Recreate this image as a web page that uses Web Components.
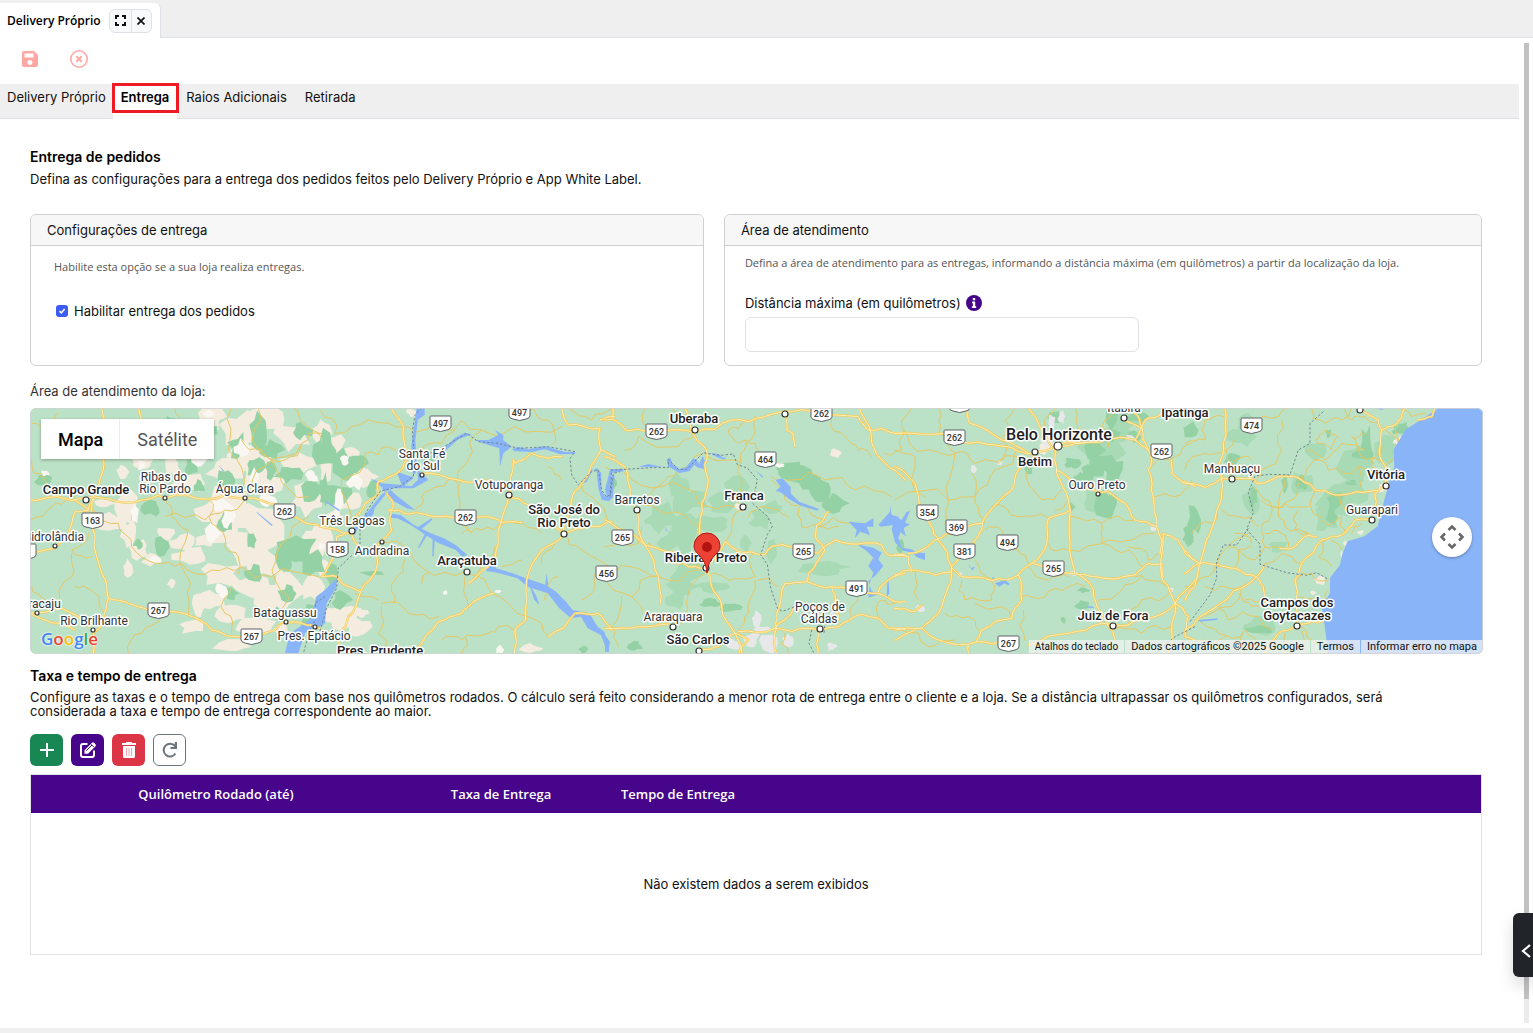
<!DOCTYPE html>
<html lang="pt-BR">
<head>
<meta charset="utf-8">
<title>Delivery Próprio</title>
<style>
  html, body { margin: 0; height: 100%; }
  body {
    font-family: Inter, "Liberation Sans", sans-serif;
    font-size: 13px;
    color: #111;
    background: #fff;
  }
</style>
</head>
<body>
<app-shell>
  <window-tab slot="window" label="Delivery Próprio"></window-tab>
  <form-toolbar></form-toolbar>
  <page-tabs>
    <a href="#delivery">Delivery Próprio</a>
    <a href="#entrega" aria-current="page">Entrega</a>
    <a href="#raios">Raios Adicionais</a>
    <a href="#retirada">Retirada</a>
  </page-tabs>
  <delivery-page></delivery-page>
</app-shell>
<side-drawer></side-drawer>

<script>
class BaseElement extends HTMLElement {
  constructor() {
    super();
    this.attachShadow({ mode: 'open' });
  }

  connectedCallback() {
    this.shadowRoot.innerHTML = this.template();
  }
}

class AppShell extends BaseElement {
  template() {
    return `
      <style>
        :host { display: flex; flex-direction: column; min-height: 100vh; box-sizing: border-box; border-bottom: 5px solid #f0f0f0; }
        header { display: flex; height: 37px; background: #efefef; border-bottom: 1px solid #dee2e6; }
        .body { flex: 1; display: flex; }
        main { flex: 1; min-width: 0; }
        .rail { width: 5px; margin: 5px 4px 5px 5px; background: #ebebeb; }
        .thumb { height: 97.5%; background: #c1c1c1; }
      </style>
      <header><slot name="window"></slot></header>
      <div class="body">
        <main><slot></slot></main>
        <div class="rail" aria-hidden="true"><div class="thumb"></div></div>
      </div>
    `;
  }
}

class WindowTab extends BaseElement {
  template() {
    return `
      <style>
        :host {
          display: flex;
          align-items: center;
          gap: 8px;
          box-sizing: border-box;
          height: 35px;
          margin-top: 3px;
          padding: 0 8px 0 7px;
          background: #fff;
          border-right: 1px solid #dee2e6;
          border-top-right-radius: 6px;
        }
        .title { font-family: "Open Sans", sans-serif; font-size: 12px; font-weight: 600; color: #000; }
        .group { display: flex; border: 1px solid #dee2e6; border-radius: 6px; background: #f8f9fa; }
        button { display: grid; place-items: center; width: 21px; height: 22px; padding: 0; border: 0; background: none; }
        button + button { border-left: 1px solid #dee2e6; width: 20px; }
      </style>
      <span class="title">${this.getAttribute('label')}</span>
      <div class="group">
        <button aria-label="Expandir">
          <svg width="11" height="11" viewBox="0 0 11 11" fill="none" stroke="#111" stroke-width="2"><path d="M1 4V1h3M7 1h3v3M10 7v3H7M4 10H1V7"/></svg>
        </button>
        <button aria-label="Fechar">
          <svg width="8" height="8" viewBox="0 0 8 8" fill="none" stroke="#111" stroke-width="1.700"><path d="M.5.500l7 7M7.500.500l-7 7"/></svg>
        </button>
      </div>
    `;
  }
}

class FormToolbar extends BaseElement {
  template() {
    return `
      <style>
        :host { display: flex; align-items: center; gap: 29px; height: 42px; padding: 0 20px 4px; }
        button { display: grid; place-items: center; width: 20px; height: 20px; padding: 0; border: 0; background: none; }
      </style>
      <button aria-label="Salvar" disabled>
        <svg width="16" height="16" viewBox="0 0 16 16"><path fill="#ffa8a3" fill-rule="evenodd" d="M2 0h10l4 4v10a2 2 0 0 1-2 2H2a2 2 0 0 1-2-2V2a2 2 0 0 1 2-2zM2.500 2.500v4h9v-4zM8 9a2.500 2.500 0 1 0 0 5 2.500 2.500 0 0 0 0-5z"/></svg>
      </button>
      <button aria-label="Cancelar" disabled>
        <svg width="18" height="18" viewBox="0 0 18 18" fill="none" stroke="#ffa8a3"><circle cx="9" cy="9" r="8.200" stroke-width="1.600"/><path stroke-width="2" d="M6.300 6.300l5.400 5.400M11.700 6.300l-5.400 5.400"/></svg>
      </button>
    `;
  }
}

class PageTabs extends BaseElement {
  template() {
    return `
      <style>
        :host { display: block; }
        nav { display: flex; height: 34px; background: #efefef; border-bottom: 1px solid #dee2e6; }
        ::slotted(a) {
          position: relative;
          box-sizing: border-box;
          height: 35px;
          padding: 0 9px;
          line-height: 27px;
          color: #111;
          text-decoration: none;
        }
        ::slotted(a:first-child) { padding: 0 7px; }
        ::slotted(a[aria-current]) { padding: 0 8px; background: #fff; color: #000; font-weight: 600; }
        ::slotted(a[aria-current])::after {
          content: "";
          position: absolute;
          inset: -1px -2px 6px -1px;
          border: 3px solid #ed1c24;
        }
      </style>
      <nav><slot></slot></nav>
    `;
  }
}

class PanelCard extends BaseElement {
  template() {
    return `
      <style>
        :host { display: block; box-sizing: border-box; height: 152px; border: 1px solid #d0d0d0; border-radius: 6px; overflow: hidden; }
        h3 { margin: 0; padding: 0 16px; font-size: 13px; font-weight: 400; line-height: 30px; background: #f7f7f7; border-bottom: 1px solid #d0d0d0; }
      </style>
      <h3>${this.getAttribute('heading')}</h3>
      <slot></slot>
    `;
  }
}

class DataGrid extends BaseElement {
  template() {
    return `
      <style>
        :host { display: block; border: 1px solid #dee2e6; }
        table { width: 100%; border-collapse: collapse; table-layout: fixed; }
        th { height: 38px; padding: 0; box-sizing: border-box; background: #46058b; color: #fff; font: 600 13px "Open Sans", sans-serif; }
        td { height: 141px; padding: 0; text-align: center; }
        .distance { width: 370px; }
        .fee { width: 200px; }
        .time { width: 154px; }
      </style>
      <table>
        <colgroup><col class="distance"><col class="fee"><col class="time"><col></colgroup>
        <thead><tr><th>Quilômetro Rodado (até)</th><th>Taxa de Entrega</th><th>Tempo de Entrega</th><th></th></tr></thead>
        <tbody><tr><td colspan="4">Não existem dados a serem exibidos</td></tr></tbody>
      </table>
    `;
  }
}

class IconButton extends BaseElement {
  template() {
    return `
      <style>
        :host { display: block; }
        button { display: grid; place-items: center; box-sizing: border-box; width: 33px; height: 32px; padding: 0; border: 1px solid transparent; border-radius: 6px; color: #fff; background: var(--button-color); }
        :host([outline]) button { color: #6c757d; border-color: #6c757d; background: #fff; }
      </style>
      <button aria-label="${this.getAttribute('label')}"><slot></slot></button>
    `;
  }
}

class DeliveryPage extends BaseElement {
  template() {
    return `
      <style>
        :host { display: block; padding: 28px 37px 0 30px; }
        h2 { margin: 0; font-size: 14px; font-weight: 600; line-height: 20px; color: #000; }
        p { margin: 0; }
        .lead { margin-top: 2px; line-height: 20px; }
        .cards { display: grid; grid-template-columns: 8fr 9fr; gap: 20px; margin-top: 25px; }
        .hint { font: 11px/16px "Open Sans", sans-serif; color: #555; }
        .enable { padding: 13px 23px; }
        .check { display: flex; align-items: center; gap: 6px; margin: 26px 0 0 2px; line-height: 20px; }
        .check input {
          appearance: none;
          width: 12px;
          height: 12px;
          margin: 0;
          border-radius: 3px;
          background: #3b5cf5 url("data:image/svg+xml,%3Csvg xmlns='http://www.w3.org/2000/svg' viewBox='0 0 12 12'%3E%3Cpath fill='none' stroke='white' stroke-width='1.6' d='M3.500 6.200l1.800 1.700 3.300-3.800'/%3E%3C/svg%3E");
        }
        .area { padding: 9px 20px; }
        .field { display: flex; align-items: center; gap: 5px; margin-top: 22px; line-height: 20px; }
        .distance { display: block; box-sizing: border-box; width: 55%; height: 35px; margin-top: 4px; padding: 0 12px; border: 1px solid #dee2e6; border-radius: 6px; font: inherit; }
        .map-title { margin-top: 15px; line-height: 20px; color: #333; }
        store-map { margin-top: 7px; }
        .rates { margin-top: 12px; }
        .rates + p { margin-top: 4px; padding-right: 32px; line-height: 14px; }
        .actions { display: flex; gap: 8px; margin: 16px 0 8px; }
      </style>
      <h2>Entrega de pedidos</h2>
      <p class="lead">Defina as configurações para a entrega dos pedidos feitos pelo Delivery Próprio e App White Label.</p>
      <div class="cards">
        <panel-card heading="Configurações de entrega">
          <div class="enable">
            <p class="hint">Habilite esta opção se a sua loja realiza entregas.</p>
            <label class="check"><input type="checkbox" checked>Habilitar entrega dos pedidos</label>
          </div>
        </panel-card>
        <panel-card heading="Área de atendimento">
          <div class="area">
            <p class="hint">Defina a área de atendimento para as entregas, informando a distância máxima (em quilômetros) a partir da localização da loja.</p>
            <div class="field">
              <label for="distance">Distância máxima (em quilômetros)</label>
              <svg width="16" height="16" viewBox="0 0 16 16"><circle cx="8" cy="8" r="8" fill="#46058b"/><path fill="#fff" d="M6.800 3h2.400v2.200H6.800zM6 6.500h3.200v4.700h1V13H5.900v-1.800h1V8.200H6z"/></svg>
            </div>
            <input class="distance" id="distance" type="text">
          </div>
        </panel-card>
      </div>
      <p class="map-title">Área de atendimento da loja:</p>
      <store-map></store-map>
      <h2 class="rates">Taxa e tempo de entrega</h2>
      <p>Configure as taxas e o tempo de entrega com base nos quilômetros rodados. O cálculo será feito considerando a menor rota de entrega entre o cliente e a loja. Se a distância ultrapassar os quilômetros configurados, será considerada a taxa e tempo de entrega correspondente ao maior.</p>
      <div class="actions">
        <icon-button label="Adicionar" style="--button-color: #198754">
          <svg width="14" height="14" viewBox="0 0 14 14" stroke="#fff" stroke-width="2"><path d="M7 0v14M0 7h14"/></svg>
        </icon-button>
        <icon-button label="Editar" style="--button-color: #46058b">
          <svg width="18" height="18" viewBox="0 0 18 18" fill="none" stroke="#fff" stroke-width="2"><path d="M8.500 3H4Q2 3 2 5v9q0 2 2 2h9q2 0 2-2V9.500"/><path fill="#fff" stroke="none" d="M5.500 9.200L13 1.700q1-1 2 0l1.500 1.500q1 1 0 2L9 12.700H5.500z"/><path stroke="#46058b" stroke-width="1" d="M7.200 9.800l5.700-5.700M12 3.200l3 3"/></svg>
        </icon-button>
        <icon-button label="Excluir" style="--button-color: #dc3545">
          <svg width="14" height="16" viewBox="0 0 14 16"><path fill="#fff" d="M4.500 0h5l.7 1H14v2H0V1h3.800zM1 4h12v10.500q0 1.500-1.500 1.500h-9Q1 16 1 14.500z"/><path stroke="#f0a6ac" d="M4.500 6v8M7 6v8M9.500 6v8"/></svg>
        </icon-button>
        <icon-button label="Atualizar" outline>
          <svg width="16" height="16" viewBox="0 0 16 16" fill="none" stroke="#6c757d" stroke-width="2"><path d="M13.500 11.500A6.400 6.400 0 1 1 13 4"/><path fill="#6c757d" stroke="none" d="M15 0v7H8.500V5H12L13 0z"/></svg>
        </icon-button>
      </div>
      <data-grid></data-grid>
    `;
  }
}

// Map data. The map is split in five tiles, 870 units apart, three units to a pixel.
const TILES = [
  {
    beige: [[560,50,45,40],[640,90,60,60],[720,60,60,40],[800,110,60,40],[680,180,70,50],[600,210,60,40],[480,120,30,50],[440,200,30,30],[500,250,60,30],[610,300,70,60],[710,240,60,50],[830,190,60,40],[850,300,60,50],[560,340,50,40],[590,400,50,50],[680,350,70,40],[730,400,60,50],[470,430,40,30],[420,400,30,20],[500,470,60,30],[650,450,50,50],[720,490,60,50],[590,520,60,40],[670,560,60,40],[740,600,60,50],[800,570,60,50],[560,600,40,30],[620,640,50,30],[500,680,40,25],[520,620,20,40],[300,320,40,50],[260,370,50,30],[310,400,30,40],[340,450,30,30],[380,480,30,20],[290,215,20,20],[240,310,30,20],[200,370,20,20],[440,550,15,15],[310,505,20,25],[350,190,40,20],[370,230,30,20],[850,440,50,50],[860,560,40,50],[700,680,60,30],[620,740,60,20],[770,690,30,20],[540,420,40,20]],
    dark: [[700,90,30,60],[640,140,30,40],[740,150,35,30],[790,220,40,30],[830,90,30,30],[600,240,30,40],[690,200,30,30],[500,200,25,35],[520,260,20,20],[380,325,30,25],[600,370,25,35],[780,340,30,20],[860,270,30,40],[410,440,25,30],[340,430,15,20],[820,440,60,40],[780,480,30,40],[860,490,40,40],[790,580,30,25],[690,520,30,25],[620,580,20,20],[850,650,30,40],[440,90,20,50],[60,240,30,20],[740,210,20,30],[680,420,20,30],[760,640,25,20],[560,90,20,20]],
    white: [[60,220,15,10],[520,180,25,25],[650,150,25,30],[690,235,15,30],[580,320,25,25],[610,350,20,40],[560,400,25,35],[390,480,18,12],[330,340,15,30],[590,570,20,25],[730,300,30,20],[550,40,15,12],[860,230,20,20],[350,195,15,20]],
    major: [[[230,24],[245,130],[235,210],[205,290]],[[15,300],[100,290],[150,300],[205,290],[300,308],[400,285],[420,295],[550,297],[600,285],[660,295],[760,315],[880,375]],[[150,300],[190,330],[205,295],[200,330],[210,410],[230,520],[250,595],[235,660],[205,700],[205,760]],[[190,330],[150,335],[130,400],[90,445],[15,460]],[[250,595],[310,610],[370,630],[440,635],[490,645],[560,690],[620,710],[680,705],[750,690],[780,665],[830,670],[890,690]],[[15,640],[110,625],[190,680]],[[15,640],[60,660],[150,690]],[[340,24],[350,60]]],
    minor: [[[200,330],[280,370],[320,440],[390,490],[470,490],[560,510],[650,500],[740,530],[880,530]],[[420,295],[440,350],[490,390],[480,520],[490,640]],[[620,24],[610,150],[650,280]],[[700,24],[700,150],[760,220],[850,290]],[[650,280],[720,200],[830,130],[890,100]],[[550,297],[560,370],[600,440],[640,470],[640,520]],[[20,70],[80,80],[100,40]],[[20,180],[60,240],[150,290]],[[15,360],[80,320],[140,300]],[[110,625],[140,530],[140,460]],[[190,400],[140,450],[200,470]],[[240,640],[180,560],[150,560]],[[410,650],[350,700],[310,760]],[[620,560],[600,640],[620,700]],[[850,350],[770,430],[750,540],[780,660]],[[760,24],[850,80],[890,130]],[[420,350],[540,360],[600,330],[660,300]],[[450,24],[470,80],[500,120]],[[830,130],[780,180],[710,150],[650,120]],[[20,560],[60,600],[110,625]]],
    water: ['M780 760l15-60 60-40 20-70 25-20v60l-30 50-30 20-20 60z','M695 335l48 40-3 3-45-40z','M580 195l18 18-3 2z'],
    border: ['M900 590l-30 20 5 40-20 40-20 70']
  },
  {
    beige: [[20,100,30,50],[60,140,40,40],[110,170,30,30],[150,230,40,40],[100,300,40,40],[30,220,20,40],[60,350,30,20],[20,400,30,30],[40,430,15,40],[20,500,30,30],[40,640,40,30],[90,650,50,40],[130,680,40,30],[290,38,20,12],[650,745,35,15],[140,640,20,15]],
    dark: [[30,150,40,60],[90,200,40,60],[60,280,60,30],[130,190,30,30],[170,270,20,30],[25,270,15,50],[20,600,20,30],[50,520,20,40],[340,180,25,15],[80,600,30,30],[805,748,15,12],[170,520,40,8]],
    white: [[120,240,25,30],[70,310,15,40],[90,180,15,20],[550,575,12,6],[555,748,14,12],[390,578,8,8],[20,440,10,15]],
    major: [[[230,24],[265,80],[275,180],[245,220],[190,245],[190,280],[150,310],[120,350],[108,390]],[[15,380],[108,400]],[[108,390],[130,440]],[[320,220],[430,240],[520,242]],[[90,400],[65,410],[40,500],[20,530],[65,530],[80,550],[135,575]],[[220,330],[280,342],[380,350],[430,355],[510,350],[560,367],[620,368]],[[215,280],[235,320],[225,350],[230,390],[190,430],[165,540],[135,580],[100,650],[65,760]],[[740,24],[760,75],[855,85],[858,150],[800,250],[770,300],[745,400],[680,450],[635,540],[632,660],[600,690],[598,760]],[[595,180],[600,190],[650,160],[700,175],[740,170]],[[595,180],[580,290],[560,360],[550,430],[520,500],[460,550]],[[580,290],[640,315],[690,370],[745,400],[820,380],[890,365]],[[300,750],[370,665],[440,640],[460,620],[535,580]],[[700,710],[780,640],[850,640],[890,690]],[[855,60],[900,50]],[[858,150],[900,170]]],
    minor: [[[15,30],[60,100],[160,60],[240,80],[380,90],[500,90],[600,80],[740,80]],[[270,180],[220,140],[150,160],[80,240],[90,380]],[[440,240],[435,320],[440,370],[470,400]],[[430,250],[370,260],[320,290],[300,330]],[[570,370],[500,390],[440,400]],[[745,400],[800,450],[890,530]],[[680,490],[720,430]],[[480,540],[500,490],[540,440]],[[200,430],[330,510],[450,515]],[[460,520],[530,580],[640,650],[700,710]],[[450,530],[460,620]],[[340,520],[320,550]],[[200,610],[280,640],[370,650]],[[235,610],[240,540],[270,480]],[[200,620],[190,700],[220,760]],[[380,720],[440,720],[520,700],[550,680],[600,690]],[[440,760],[450,710]],[[730,530],[700,570],[690,600]],[[500,90],[460,180],[430,240]],[[420,90],[380,130],[320,160]],[[760,24],[830,60],[890,24]],[[800,250],[850,310],[885,370]],[[800,600],[840,560],[850,500]],[[740,240],[700,200]],[[600,370],[680,400]],[[620,480],[560,500]],[[640,24],[700,60],[720,130]],[[120,580],[190,600]]],
    water: ['M305 24h24v20l-20 15-8 60 8 120-20 20-40-5-30 20-40 50-5 20-40 30-15 30-15-5 25-30 30-35 40-50 30-20 40-8 25-20-5-100z','M165 235l40 30 90 0 45-25-30-30-20 20-45-15 15 40-60-5z','M200 265l30 35 45 25 25 5-15-12-45-35-20-20z','M222 340l35 5 40 30 50 25 40 15 35 20 35 30-15 5-20-20-50-20-40-25-45-30-40-20-25-2z','M340 400l-28 45-3-2 24-48z','M360 410l-4 60-4-1 1-65z','M310 380l40-25 2 4-35 30z','M535 470l8 35 50 15 40 15 60 20 30 20 30 30 20 25 50 10 25 40 20 15 15 60-7-2-18-48-40-20-20-35-30 5-35-30-35-45-60-20-30-25-60-17-35-5z','M640 545l25 45 8 25-15-15-15-45z','M690 560l5-40 5 35z','M345 160l40-12 35-35 30-15 20 5-40 15-40 35z','M480 120l40 0 30-15-10-15 25 15 0 15 25 20-25 20-10 40-2-55-50-15z','M590 148l20-8 30 8 50-10 60 18 30 0v5l-45 2-45-15-40 8-50-2z','M800 250l25-40 22-5 12 15v50l12 20 12-5 8-60 8 2-5 65-12 12-22-5-10-35-5-50-10-8-20 40z','M30 300l45 30-3 4-40-28z','M0 610l30-40 35-35v25l-30 50-5 60-30 20z'],
    border: ['M320 24l-20 20-8 50 8 90-5 45-40 30-60 15-40 60-20 50v60l-65 60-5 60-30 60-20 70','M345 160l60-30 50-30 35 25 60 5 60 15 90-5 80 15-15 20 5 50 20 30 40-40 20-5 10 60 15 22 12-12 8-60 20-5']
  },
  {
    beige: [[400,318,12,10],[690,160,20,14],[525,197,18,8],[415,328,10,8]],
    dark: [[560,215,50,28],[600,235,50,35],[640,265,50,40],[690,310,45,35],[320,610,35,15],[380,622,40,18],[90,738,25,15],[25,245,14,20],[885,440,12,20],[550,205,40,15]],
    mid: [[220,260,35,40],[170,350,50,50],[250,300,60,40],[240,400,40,60],[330,370,60,30],[390,260,40,40],[350,310,40,30],[470,360,40,30],[200,420,40,30],[250,520,50,40],[210,600,30,25],[300,470,40,30],[330,560,50,20],[420,430,20,30],[500,450,20,40],[640,510,60,20],[500,320,30,20],[140,360,30,15],[680,500,50,15],[230,560,50,25]],
    white: [[525,197,16,7]],
    urban: [[455,660,15,25],[440,720,25,30],[490,730,30,30],[385,735,20,20],[680,740,15,15],[475,690,30,10],[305,505,15,12],[680,640,10,8],[550,720,18,22]],
    major: [[[0,60],[30,60],[60,90],[130,95],[270,97],[380,60],[480,50],[560,35],[620,35],[760,50],[790,90],[830,85],[890,100]],[[240,24],[260,90],[305,150],[310,240],[290,310],[283,400],[300,500],[320,560],[350,620],[390,700],[410,760]],[[0,170],[60,200],[75,290],[95,330],[120,435],[160,530]],[[0,360],[50,390],[120,435],[200,455],[250,500],[290,505]],[[310,490],[360,425],[400,455],[480,463],[500,440],[530,433],[590,440],[640,460],[690,420],[760,432],[830,435],[850,465],[900,465]],[[540,45],[545,90],[565,100],[570,140]],[[670,335],[635,375],[635,420],[660,450],[640,480],[610,520],[605,545],[540,550],[515,640],[510,700],[515,760]],[[605,545],[680,560],[740,565],[800,580],[870,605],[900,605]],[[820,575],[850,540],[900,520]],[[0,685],[100,680],[190,672]],[[400,695],[510,685],[560,695],[640,690],[700,680],[760,645],[820,655],[850,685],[900,688]],[[510,685],[550,650],[570,620]],[[160,530],[165,610]],[[765,24],[780,60],[810,150],[830,180],[870,210],[900,240]],[[640,700],[640,760]],[[680,560],[690,610],[700,660]],[[290,750],[340,740],[390,700]],[[390,700],[430,720],[400,760]],[[24,24],[20,60]]],
    minor: [[[305,160],[250,200],[190,230],[100,290]],[[270,100],[220,140],[100,110],[60,150]],[[420,60],[370,90],[400,130],[450,130],[480,170]],[[425,130],[400,200],[410,260],[400,310]],[[500,230],[560,240],[660,240],[750,270],[860,290]],[[500,240],[540,300],[590,310],[660,360]],[[415,330],[380,390],[360,425]],[[100,300],[180,340],[280,380]],[[60,220],[170,260],[280,310],[390,320]],[[130,430],[200,490],[290,505]],[[0,440],[100,430],[110,380]],[[0,520],[80,590],[190,670]],[[80,590],[160,530],[280,510]],[[165,530],[80,500],[20,510]],[[300,520],[250,580],[240,640],[200,680]],[[320,520],[370,540],[450,530],[445,460]],[[420,130],[450,50]],[[680,60],[720,110],[760,150],[800,170]],[[590,310],[590,380],[640,380],[730,370]],[[640,380],[700,380]],[[120,24],[130,80]],[[430,350],[480,320],[550,350]],[[310,170],[380,180],[410,190]],[[450,540],[430,640],[400,690]],[[720,560],[760,600],[740,650]],[[820,650],[830,600],[870,610]],[[550,760],[540,700]],[[0,200],[60,220]],[[160,640],[160,680]],[[460,540],[520,560]],[[840,160],[890,150],[895,90]],[[200,24],[240,60]],[[50,590],[20,680],[40,740]]],
    water: ['M100 200l30-8 40 8 20 0-5-20 10-8 8 20 20 15 20-5 20-25 10 0 10 15 10-25 8 20-5 20-20-5-8-8-15 20-30 5-30-18-30 0-40 0z','M320 160l20 2 15 12 10-5-8 10-15-5-20-10z','M512 240l20-5 25 25 0 20 25 25 60 22-5 5-50-15-35-20-25-20-15-5 15-12z','M450 210l25 20-5 2z','M730 365l50 5 25-15 0 25-20 0 10 25-30-10-15 20 5-25z','M820 375l35-40 0-20 5 30 20 5 15 30 8 30-40-35-35 5z','M755 433l50 10 25 15-10 20 15 20-25 30-20 15 10 30 20 10-30 10 5-45 10-30-15-20 15-25-20-20z','M15 208l40-2v8l-35 5-5 50 5 20-12 10-8-30z','M0 705l15 20-5 30-10 0z','M850 530l3 50-8 10 2-50z','M180 380l6 10-2 6z'],
    border: ['M15 290l5-80 40-2 80-5 50 0v-25l30 30 25 0 30-30 20-20 50 8 40-4 12 32 30 10 30 35-15 70 45 40 15 30-15 25-20 60 20 30 10 70 20 60 15 10 55-20 50 10 25 30-5 45','M620 690l-8 40 15 30']
  },
  {
    beige: [[460,140,25,18],[440,155,20,10]],
    dark: [[600,150,30,30],[655,210,35,50],[580,210,30,30],[630,310,40,45],[610,200,35,30],[530,190,25,20],[480,50,30,20],[560,240,25,25],[730,50,40,15],[640,110,40,20],[565,570,20,10],[560,615,25,15],[505,660,8,12],[650,60,20,30],[880,400,15,40],[20,440,8,25],[400,210,15,20],[530,320,10,15],[720,110,20,20]],
    mid: [[620,160,70,60],[670,100,50,40],[600,300,40,40],[700,60,60,30]],
    urban: [[235,207,12,12],[315,188,10,8],[75,625,14,14],[470,65,12,25],[455,120,20,20],[195,525,10,8],[705,112,15,8],[535,520,12,8],[775,385,10,8],[500,50,12,20],[830,570,8,8]],
    major: [[[0,100],[150,100],[200,125],[300,135],[370,155],[420,158],[480,140],[560,128],[660,115],[720,120],[760,150],[770,180],[760,210],[775,290],[785,380],[800,420],[795,460]],[[0,200],[60,250],[110,380],[130,420],[170,500]],[[210,24],[225,70],[320,120],[400,160]],[[400,24],[440,90],[470,140]],[[480,140],[485,220],[520,300],[525,430],[540,520]],[[420,160],[370,210],[350,270],[275,345],[260,390],[240,420],[210,460],[170,500],[160,560],[130,640],[80,685],[0,690]],[[525,330],[460,355],[455,430],[410,490],[370,525],[290,542],[200,530],[170,505]],[[410,490],[480,510],[540,520],[600,530],[720,525],[760,490],[800,490],[805,530]],[[540,520],[590,560],[600,600],[640,680],[660,720]],[[485,210],[560,260],[640,275],[690,310],[720,360],[785,380]],[[0,525],[50,510],[120,525],[170,515]],[[0,465],[40,470],[50,515]],[[370,525],[380,600],[350,655],[260,690],[245,725],[340,720]],[[80,685],[130,720],[245,725]],[[400,735],[520,700],[620,670],[700,675],[760,655],[840,610],[900,540]],[[840,610],[820,560],[800,530],[805,400],[850,420],[870,460],[900,480]],[[840,610],[830,680],[820,760]],[[840,610],[880,650],[870,710],[900,720]],[[0,625],[60,635],[80,615]],[[720,120],[750,60],[800,40]],[[720,40],[740,80],[760,150]],[[830,180],[830,220],[870,250],[900,260]],[[690,60],[740,85]],[[40,460],[120,420],[190,395],[260,370]],[[0,720],[60,690]],[[220,760],[220,735]],[[500,130],[570,128]]],
    minor: [[[130,24],[130,100],[180,160],[240,190],[370,170]],[[50,24],[20,80],[100,150],[180,160]],[[0,300],[160,300],[240,290],[300,210],[380,140]],[[180,160],[160,300],[150,370]],[[230,220],[240,310],[270,370]],[[290,320],[370,350],[460,355]],[[460,430],[520,450],[640,420],[780,400]],[[530,350],[620,370],[720,360]],[[620,370],[620,430],[700,450],[740,500]],[[270,390],[320,390],[325,440],[370,450],[400,490]],[[240,480],[260,520],[290,540]],[[200,540],[210,600],[290,600],[290,545]],[[380,590],[450,590],[520,560],[570,560]],[[610,600],[680,570],[740,530]],[[700,670],[740,600],[830,570]],[[150,640],[220,650],[250,690]],[[385,630],[390,720]],[[350,655],[320,620],[240,610]],[[60,510],[70,600]],[[480,24],[450,80]],[[320,120],[310,190]],[[770,200],[840,170],[890,130]],[[780,290],[840,290],[890,240]],[[810,180],[800,140]],[[820,560],[760,540],[720,530]],[[400,500],[460,540],[520,530]],[[540,24],[560,100],[500,130]],[[500,270],[440,300],[400,200]],[[680,24],[620,80],[640,140]],[[830,680],[740,700],[650,690]],[[360,24],[330,60],[320,110]],[[20,690],[100,740],[180,720]],[[700,440],[760,480],[790,460]],[[520,300],[480,330]],[[0,150],[60,170],[90,290]]],
    water: ['M0 350l20 10 15-25 10-2-15 35 15 5-25 15-10 25 10 30 30 5 15 10-10 2-30-8-25-25-10-40z','M50 455l40 5 0 20-25-8z','M290 530l15 8-8 5z','M300 550l30-10 15 12-5 4-12-6-15 10z','M220 490l5 15 15-5-8 12z','M575 618l20 2 3 5-18-2z'],
    border: ['M900 680l-60 30-60 50']
  },
  {
    beige: [[595,265,18,14],[405,540,20,14],[525,398,12,6],[480,430,6,10],[470,462,4,10],[385,578,8,6],[650,125,25,14]],
    dark: [[30,360,25,50],[15,90,25,30],[140,180,30,20],[205,290,15,35],[300,250,12,30],[350,250,18,25],[545,130,20,50],[450,300,30,30],[440,350,20,30],[500,250,20,10],[655,85,20,18],[225,690,40,15],[430,100,10,15],[10,410,18,30],[640,90,20,15],[540,165,35,20]],
    mid: [[510,190,60,60],[460,300,70,50],[390,150,30,30],[170,110,40,30],[200,300,30,50],[600,150,30,60],[280,440,30,20],[220,680,60,30],[500,280,60,40],[180,60,30,30],[420,360,40,40],[350,250,30,40]],
    major: [[[120,24],[115,130],[100,200],[110,240],[105,310],[75,400],[45,490],[30,560],[0,600]],[[0,245],[60,262],[110,235],[200,235],[215,250],[300,228],[350,240],[390,270],[450,285],[515,275],[580,270],[605,255]],[[530,30],[580,60],[590,90],[585,170],[610,220],[600,260],[570,280],[570,330]],[[560,360],[510,360],[470,405],[410,420],[350,490],[330,540],[335,680]],[[660,24],[630,75],[590,90]],[[0,450],[45,490],[100,493],[150,505],[215,530],[235,560],[240,600]],[[240,495],[200,545],[100,615],[45,650],[0,690]],[[0,520],[45,490]],[[285,445],[330,440],[370,405],[395,410]],[[335,680],[280,700],[240,760]],[[335,670],[380,665],[410,665]],[[700,60],[740,50],[750,24]]],
    minor: [[[0,210],[60,160],[110,160]],[[170,60],[200,80],[280,50],[350,24]],[[290,60],[290,150],[230,210],[215,240]],[[150,120],[130,190],[110,230]],[[0,130],[60,120],[60,60],[115,50]],[[20,400],[80,370],[100,320]],[[200,180],[150,180],[140,230]],[[210,260],[240,300],[260,340],[230,380],[240,440]],[[300,240],[280,320],[300,380],[370,400]],[[380,24],[420,70],[470,60],[500,24]],[[480,24],[500,60],[540,50],[580,70]],[[370,150],[420,180],[470,130],[540,150]],[[540,100],[500,110],[520,150],[580,180]],[[600,90],[640,130],[690,90]],[[640,24],[680,50],[720,40]],[[420,90],[460,110],[440,150],[390,120],[420,90]],[[390,180],[430,210],[520,200],[580,210]],[[350,240],[370,200],[400,180]],[[520,200],[530,270]],[[460,290],[480,330],[550,330]],[[390,270],[380,330],[420,370],[470,350],[480,400]],[[340,330],[330,390],[370,400]],[[230,300],[300,310],[370,320]],[[240,490],[290,460],[350,490]],[[330,540],[380,520],[430,540]],[[330,600],[400,610],[430,570]],[[100,500],[130,440],[190,400]],[[130,440],[210,480],[240,440],[290,440]],[[150,510],[160,450],[200,440]],[[200,545],[160,600],[60,650]],[[240,600],[200,620],[160,580]],[[100,615],[130,660],[220,650],[260,690]],[[40,660],[100,700],[180,690],[240,740]],[[150,760],[170,700]],[[335,680],[380,720],[420,740]],[[300,700],[300,760]],[[350,690],[350,760]],[[220,380],[160,350],[110,330]],[[0,560],[60,530],[90,500]],[[590,120],[560,200],[600,230]],[[630,75],[640,160],[600,200]],[[260,320],[320,300],[340,250]],[[240,400],[290,400],[310,440]],[[200,430],[150,400]],[[420,420],[400,470],[440,500]],[[440,420],[470,450]],[[530,370],[500,400]],[[180,600],[240,600],[330,620]],[[60,560],[120,560],[190,550]],[[0,700],[60,720],[120,710]]],
    water: ['M762 24h140v740H430l-14-110-6-30 25-45 0-45 30-40 8-35 15-35 50-15 40-30 20-80 20-70 10-30-2-50 35-60 65-42z','M40 660l60-5-5 5-50 5z','M570 24h30l-10 6z'],
    border: ['M415 35l-40 35 0 60-35 20-25 75-60-2-45 5-20 50 15 60-20 50 40 45 0 60 80 25 60 8 30-8 35 20','M190 385l-35 50-40 0-20 50 0 50-20 50-30 40-30 40']
  }
];

// [text, x, y, class]; y is the baseline and x the middle of the text
const CITIES = [
  ['Campo Grande', 56, 86, 'big'], ['Ribas do', 134, 73], ['Rio Pardo', 135, 85], ['Água Clara', 215, 85],
  ['Sidrolândia', 24, 133], ['Maracaju', 6, 200], ['Rio Brilhante', 64, 217], ['Bataguassu', 255, 209],
  ['Pres. Epitácio', 284, 232], ['Pres. Prudente', 350, 247, 'big'], ['Três Lagoas', 322, 117], ['Andradina', 352, 147],
  ['Santa Fé', 392, 50], ['do Sul', 393, 62], ['Votuporanga', 479, 81], ['São José do', 534, 106, 'big'],
  ['Rio Preto', 534, 119, 'big'], ['Araçatuba', 437, 157, 'big'], ['Uberaba', 664, 15, 'big'], ['Barretos', 607, 96],
  ['Franca', 714, 92, 'big'], ['Ribeirão Preto', 676, 154, 'big'], ['Araraquara', 643, 213], ['São Carlos', 668, 236, 'big'],
  ['Poços de', 790, 203], ['Caldas', 789, 215], ['Belo Horizonte', 1029, 32, 'huge'], ['Betim', 1005, 58, 'big'],
  ['Itabira', 1094, 4], ['Ipatinga', 1155, 9, 'big'], ['Ouro Preto', 1067, 81], ['Juiz de Fora', 1083, 212, 'big'],
  ['Manhuaçu', 1202, 65], ['Vitória', 1356, 71, 'big'], ['Guarapari', 1342, 106], ['Campos dos', 1267, 199, 'big'], ['Goytacazes', 1267, 212, 'big']
];

const DOTS = [
  [56, 92, 3], [135, 90, 2], [215, 90, 2], [25, 138, 2], [7, 205, 2], [63, 222, 2], [256, 214, 2], [285, 219, 2], [322, 123, 3], [352, 134, 2], [392, 67, 2],
  [479, 87, 3], [534, 126, 3], [437, 164, 3], [665, 22, 3], [755, 6, 3], [607, 102, 3], [713, 99, 3], [676, 160, 3], [643, 219, 3], [669, 243, 3], [790, 221, 3],
  [1028, 38, 4], [1005, 44, 3], [1094, 10, 3], [1068, 86, 2], [1083, 218, 3], [1202, 71, 3], [1356, 78, 3], [1342, 112, 3], [1330, 2, 3], [1267, 218, 3]
];

// an empty number leaves a shield blank where the frame hides most of it
const SHIELDS = [
  [163, 62, 112], [262, 254, 103], [267, 128, 202], [267, 221, 228], [158, 307, 141], [497, 410, 15], [497, 489, 4], [262, 435, 109], [262, 626, 23],
  [262, 791, 5], [464, 735, 51], [265, 592, 129], [456, 576, 165], [265, 773, 143], [491, 826, 180], [262, 924, 29], [354, 897, 104], [369, 926, 119],
  [381, 934, 143], [494, 977, 134], [265, 1023, 160], [267, 978, 235], [262, 1131, 43], [474, 1221, 17], ['', 929, -4], ['', -5, 143]
];

class StoreMap extends BaseElement {
  random() {
    this.seed = (this.seed * 16807) % 2147483647;
    return this.seed / 2147483647;
  }

  // irregular patch of vegetation around a centre
  patch([x, y, rx, ry]) {
    const sides = 11;
    const points = [];
    for (let i = 0; i < sides; i++) {
      const angle = (i / sides) * Math.PI * 2;
      const r = 0.55 + this.random() * 0.65;
      points.push(`${Math.round(x + Math.cos(angle) * rx * r)} ${Math.round(y + Math.sin(angle) * ry * r)}`);
    }
    return `M${points.join('L')}Z`;
  }

  // breaks every leg of a road in short bends
  road(points, bend) {
    let line = points;
    for (let pass = 0; pass < 2; pass++) {
      const next = [line[0]];
      for (let i = 1; i < line.length; i++) {
        const [ax, ay] = line[i - 1];
        const [bx, by] = line[i];
        const shift = (this.random() - 0.5) * bend;
        next.push([(ax + bx) / 2 - (by - ay) * shift, (ay + by) / 2 + (bx - ax) * shift], line[i]);
      }
      line = next;
    }
    return 'M' + line.map(p => p.map(Math.round).join(' ')).join('L');
  }

  layer(name, draw) {
    return TILES.map((tile, i) => {
      const d = (tile[name] || []).map(draw).join('');
      return d ? `<path class="${name}" transform="translate(${i * 870})" d="${d}"/>` : '';
    }).join('');
  }

  template() {
    this.seed = 4127;
    const patch = p => this.patch(p);
    const major = this.layer('major', p => this.road(p, 0.2));
    return `
      <style>
        :host { display: block; position: relative; height: 246px; margin-right: -1px; border-radius: 6px; overflow: hidden; font-family: Roboto, sans-serif; }
        :host::after { content: ""; position: absolute; inset: 0; border: 1px solid rgba(210, 210, 210, .8); border-radius: 6px; pointer-events: none; }
        .canvas { display: block; width: 100%; height: 100%; background: #bbe2c6; }
        .beige { fill: #f3ecdf; }
        .dark { fill: #94d2a5; }
        .mid { fill: #a8dab5; }
        .white { fill: #faf7f2; }
        .urban { fill: #e8e8ea; }
        .water { fill: #8ab4f8; }
        .border { fill: none; stroke: #6f8590; stroke-width: 3; stroke-dasharray: 7 6; }
        .minor, .major { fill: none; stroke-linejoin: round; stroke-linecap: round; }
        .minor { stroke: #e6c763; stroke-width: 3; }
        .major { stroke: #f5c95a; stroke-width: 7; }
        .core .major { stroke: #ffeeb5; stroke-width: 3; }
        .city { font-size: 12px; fill: #2f3437; stroke: #fff; stroke-width: 3px; stroke-linejoin: round; paint-order: stroke; text-anchor: middle; }
        .big { font-weight: 500; font-size: 13px; fill: #202124; }
        .huge { font-weight: 500; font-size: 16px; fill: #202124; }
        .dot { fill: #fff; stroke: #333; stroke-width: 1.200px; }
        .shield { fill: #fff; stroke: #5f6368; }
        .number { font-size: 9px; fill: #333; text-anchor: middle; font-weight: 500; }
        .types { position: absolute; top: 11px; left: 11px; display: flex; background: #fff; box-shadow: 0 1px 3px rgba(0, 0, 0, .3); }
        .types button { height: 40px; padding: 0 17px; border: 0; background: none; font: 400 18px Roboto, sans-serif; color: #565656; }
        .types button:first-child { padding-right: 16px; font-weight: 500; color: #000; border-right: 1px solid #ececec; }
        .pan { position: absolute; right: 11px; top: 109px; width: 40px; height: 40px; padding: 0; border: 0; border-radius: 50%; background: #fff; box-shadow: 0 1px 3px rgba(0, 0, 0, .3); }
        .google { position: absolute; left: 11px; bottom: 4px; font: 600 17px/22px "Open Sans", sans-serif; text-shadow: 0 0 2px #fff, 0 0 2px #fff; color: #4285f4; text-decoration: none; }
        .red { color: #ea4335; }
        .yellow { color: #fbbc04; }
        .green { color: #34a853; }
        .legal { position: absolute; right: 0; bottom: 0; display: flex; font-size: 11px; line-height: 14px; }
        .legal > * { margin-left: 1px; padding: 0 6px; border: 0; background: rgba(245, 245, 245, .7); color: #111; text-decoration: none; font: inherit; }
        .legal button { font-size: 10px; }
      </style>
      <svg class="canvas" viewBox="0 0 1453 246" preserveAspectRatio="xMidYMid slice">
        <g transform="scale(.33333) translate(-15 -24)">
          ${this.layer('mid', patch)}
          ${this.layer('beige', patch)}
          ${this.layer('dark', patch)}
          ${this.layer('white', patch)}
          ${this.layer('urban', patch)}
          ${this.layer('minor', p => this.road(p, 0.5))}
          ${this.layer('water', d => d)}
          ${major}
          <g class="core">${major}</g>
          ${this.layer('border', d => d)}
        </g>
        ${SHIELDS.map(([n, x, y]) => `
          <path class="shield" d="M${x - 9} ${y - 7}h19q1 0 1 1v10q0 2-4 3l-6.500 1.500-6.500-1.500q-4-1-4-3v-10q0-1 1-1z"/>
          ${n && `<text class="number" x="${x + 0.5}" y="${y + 4}">${n}</text>`}`).join('')}
        ${DOTS.map(([x, y, r]) => `<circle class="dot" cx="${x}" cy="${y}" r="${r}"/>`).join('')}
        ${CITIES.map(([name, x, y, kind]) => `<text class="city ${kind || ''}" x="${x}" y="${y}">${name}</text>`).join('')}
        <path fill="#ea4335" stroke="#b31412" d="M677 165c-1-10-4-13-7-17-4-4-6-6-6-10a13 13 0 0 1 26 0c0 4-2 6-6 10-3 4-6 7-7 17z"/>
        <circle cx="677" cy="139" r="5" fill="#b31412"/>
      </svg>
      <div class="types"><button>Mapa</button><button>Satélite</button></div>
      <button class="pan" aria-label="Controles da câmera do mapa">
        <svg width="40" height="40" viewBox="0 0 40 40" fill="none" stroke="#666" stroke-width="2.500"><path d="M16.500 13l3.500-3.500 3.500 3.500M16.500 27l3.500 3.500 3.500-3.500M13 16.500L9.500 20l3.500 3.500M27 16.500l3.500 3.500-3.500 3.500"/></svg>
      </button>
      <a class="google" href="#google">G<span class="red">o</span><span class="yellow">o</span>g<span class="green">l</span><span class="red">e</span></a>
      <div class="legal">
        <button>Atalhos do teclado</button><span>Dados cartográficos ©2025 Google</span><a href="#termos">Termos</a><a href="#erro">Informar erro no mapa</a>
      </div>
    `;
  }
}

class SideDrawer extends BaseElement {
  template() {
    return `
      <style>
        :host { display: block; position: fixed; right: 0; bottom: 56px; }
        button { display: block; width: 20px; height: 64px; padding: 12px 0 0 7px; border: 0; border-radius: 6px 0 0 6px; background: #212529; box-shadow: 0 8px 16px rgba(0, 0, 0, .15); }
        svg { display: block; }
      </style>
      <button aria-label="Abrir painel">
        <svg width="12" height="14" viewBox="0 0 12 14" fill="none" stroke="#fff" stroke-width="2.200"><path d="M10 1L3 7l7 6"/></svg>
      </button>
    `;
  }
}

customElements.define('app-shell', AppShell);
customElements.define('window-tab', WindowTab);
customElements.define('form-toolbar', FormToolbar);
customElements.define('page-tabs', PageTabs);
customElements.define('panel-card', PanelCard);
customElements.define('data-grid', DataGrid);
customElements.define('icon-button', IconButton);
customElements.define('store-map', StoreMap);
customElements.define('delivery-page', DeliveryPage);
customElements.define('side-drawer', SideDrawer);
</script>
</body>
</html>
